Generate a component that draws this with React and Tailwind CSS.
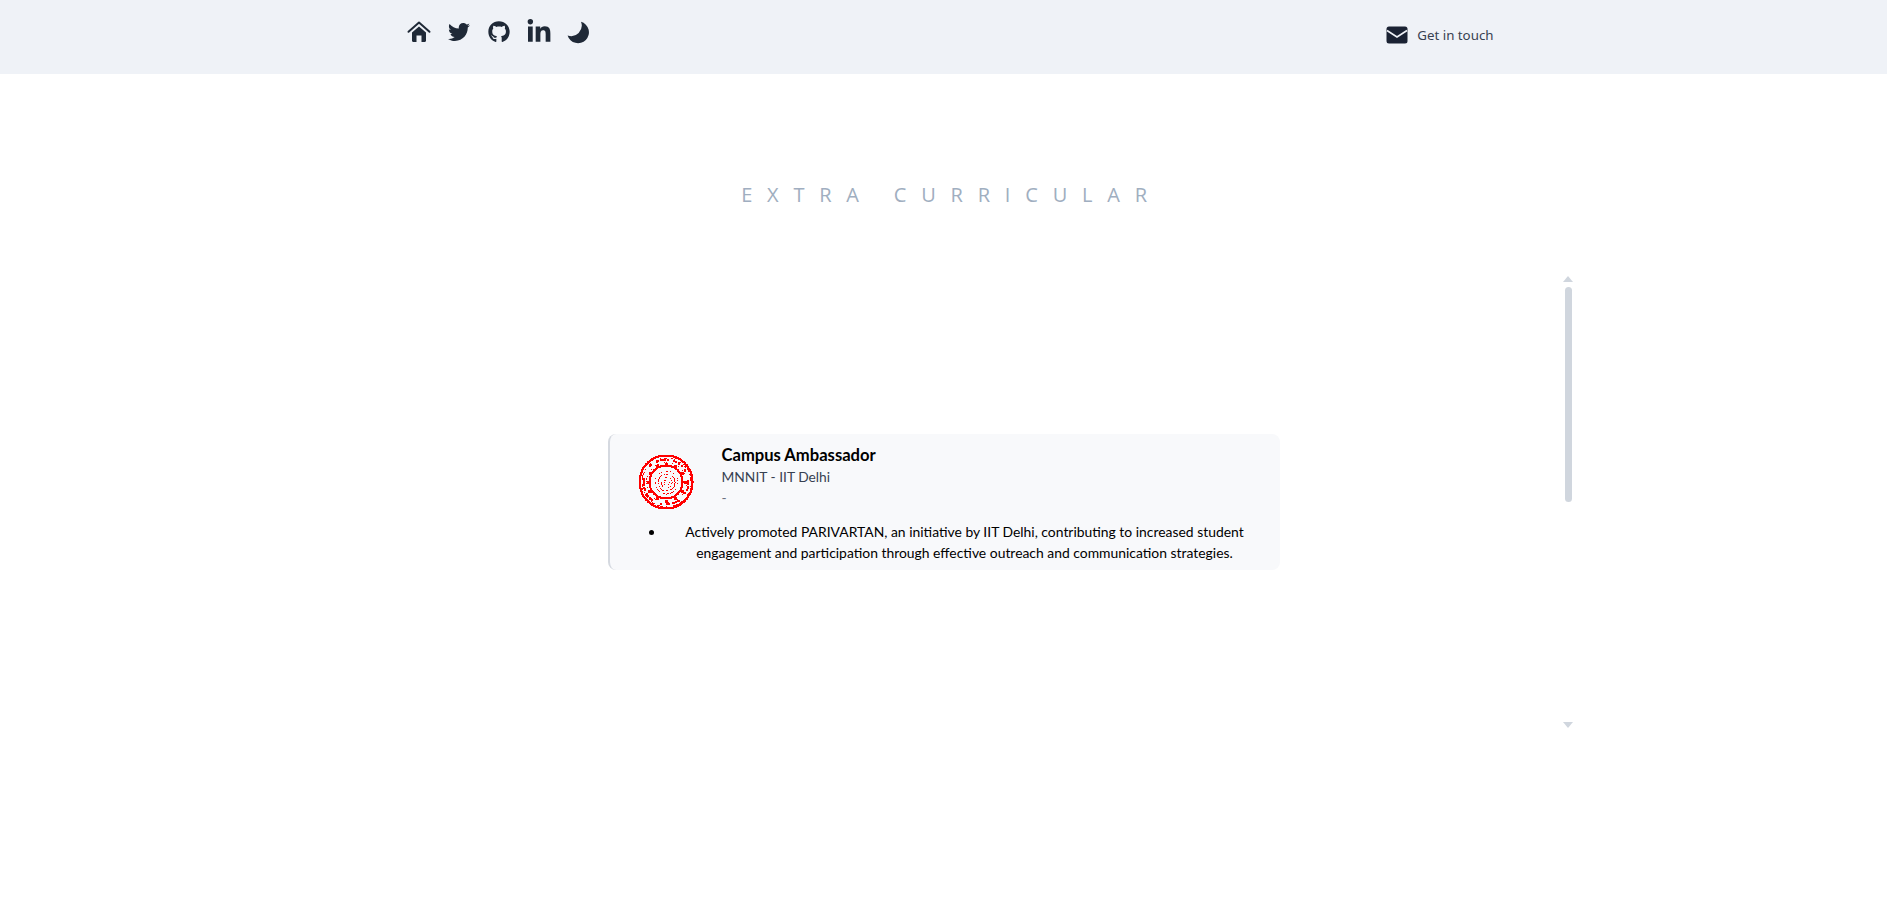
import React from "react";
import { FaTwitter, FaGithub, FaLinkedinIn } from "react-icons/fa";

// Pixel-ish institute seal, built from rings of dots
const makeSeal = () => {
  const dots = [];
  let seed = 7;
  const rand = () => {
    seed = (seed * 16807) % 2147483647;
    return seed / 2147483647;
  };
  const ring = (r, density, size = 2) => {
    const n = Math.round(2 * Math.PI * r);
    for (let i = 0; i < n; i++) {
      if (rand() > density) continue;
      const a = (i / n) * Math.PI * 2;
      dots.push([
        Math.round(28 + r * Math.cos(a)),
        Math.round(28 + r * Math.sin(a)),
        size,
      ]);
    }
  };
  ring(26.5, 1, 2);
  ring(24.5, 0.45, 1);
  ring(22.5, 0.3, 2);
  ring(20, 0.3, 1);
  ring(16.5, 0.9, 2);
  // gear teeth
  for (let i = 0; i < 12; i++) {
    const a = (i / 12) * Math.PI * 2;
    dots.push([Math.round(28 + 18.5 * Math.cos(a)), Math.round(28 + 18.5 * Math.sin(a)), 3]);
  }
  ring(11.5, 0.45, 1);
  ring(8.5, 0.55, 1);
  ring(5.5, 0.5, 1);
  ring(2.5, 0.35, 1);
  return dots;
};

const sealDots = makeSeal();

const Seal = () => (
  <svg width="56" height="56" viewBox="0 0 56 56" className="shrink-0" shapeRendering="crispEdges">
    {sealDots.map(([x, y, s], i) => (
      <rect key={i} x={x - s / 2} y={y - s / 2} width={s} height={s} fill="#ff0000" />
    ))}
  </svg>
);

const HomeIcon = () => (
  <svg viewBox="0 0 24 24" className="h-[24px] w-[24px] -ml-[1px]" fill="currentColor">
    <path d="M1.5 11.8 12 2.6l10.5 9.2" fill="none" stroke="currentColor" strokeWidth="2" strokeLinecap="round" strokeLinejoin="round" />
    <path d="M5 12.6 12 6.5l7 6.1v8.2c0 .7-.5 1.2-1.2 1.2h-3.3v-6.4h-5V22H6.2c-.7 0-1.2-.5-1.2-1.2z" />
  </svg>
);

const MoonIcon = () => (
  <svg viewBox="0 0 24 24" className="-ml-[1px] h-[24px] w-[24px]" fill="currentColor">
    <path d="M15 1.8A10.9 10.9 0 1 1 1.6 15.4 10.5 10.5 0 0 0 15 1.8z" />
  </svg>
);

const MailIcon = () => (
  <svg viewBox="0 0 22 18" className="h-[18px] w-[22px]">
    <rect x="0.5" y="0.5" width="21" height="17" rx="2.5" fill="#1a2233" />
    <path d="M1 4.5 11 11l10-6.5" fill="none" stroke="#eff2f7" strokeWidth="1.6" />
  </svg>
);

const Scrollbar = () => (
  <div className="absolute right-0 top-0 bottom-0 flex w-[9px] flex-col items-center">
    <div className="mt-[3px] h-0 w-0 border-x-[5px] border-b-[6px] border-x-transparent border-b-[#d0d6de]" />
    <div className="mt-[5px] h-[215px] w-[7px] rounded-full bg-[#d0d6de]" />
    <div className="mt-auto mb-[5px] h-0 w-0 border-x-[5px] border-t-[6px] border-x-transparent border-t-[#d0d6de]" />
  </div>
);

export default function App() {
  return (
    <div className="min-h-[908px] bg-white font-['Lato',sans-serif]">
      {/* Header */}
      <header className="h-[74px] bg-[#eff2f7]">
        <div className="mx-auto flex w-[1152px] items-start justify-between pl-10 pr-[26px]">
          <div className="mt-[20px] flex h-[24px] items-center gap-[16px] text-[#1f2937]">
            <HomeIcon />
            <FaTwitter className="mx-[1px] h-[22px] w-[22px]" />
            <FaGithub className="mx-[1px] h-[22px] w-[22px]" />
            <FaLinkedinIn className="-mx-[1px] h-[26px] w-[26px]" />
            <MoonIcon />
          </div>
          <div className="flex items-center gap-[9px] pt-[25px]">
            <MailIcon />
            <span className="font-['Noto_Sans',sans-serif] text-[13.3px] leading-5 text-[#374151]">Get in touch</span>
          </div>
        </div>
      </header>

      {/* Section title */}
      <h2 className="pt-[107px] pb-[1px] pl-4 text-center font-['Open_Sans',sans-serif] text-[20px] leading-[27px] tracking-[14.8px] text-[#a0aec0]">
        EXTRA CURRICULAR
      </h2>

      {/* Timeline area */}
      <div className="relative mx-auto mt-[64px] flex h-[460px] w-[1258px] items-center justify-center">
        <div className="mt-[-2px] h-[136px] w-[672px] rounded-lg border-l-2 border-[#d5d9e0] bg-[#f8f9fb] pt-[11px]">
          <div className="flex items-start pl-[28px]">
            <div className="pt-[9px]">
              <Seal />
            </div>
            <div className="pl-[28px]">
              <h3 className="text-[16.6px] font-bold leading-[21px] text-black">Campus Ambassador</h3>
              <p className="text-[13.8px] leading-[21px] text-[#374151]">MNNIT - IIT Delhi</p>
              <p className="text-[13.8px] leading-[22px] text-[#6b7280]">-</p>
            </div>
          </div>
          <ul className="mt-[11px] list-disc pl-[55px] pr-[15px] text-center text-[13.9px] leading-[21px] text-black">
            <li>
              Actively promoted PARIVARTAN, an initiative by IIT Delhi, contributing to increased student
              <br />
              engagement and participation through effective outreach and communication strategies.
            </li>
          </ul>
        </div>
        <Scrollbar />
      </div>
    </div>
  );
}
